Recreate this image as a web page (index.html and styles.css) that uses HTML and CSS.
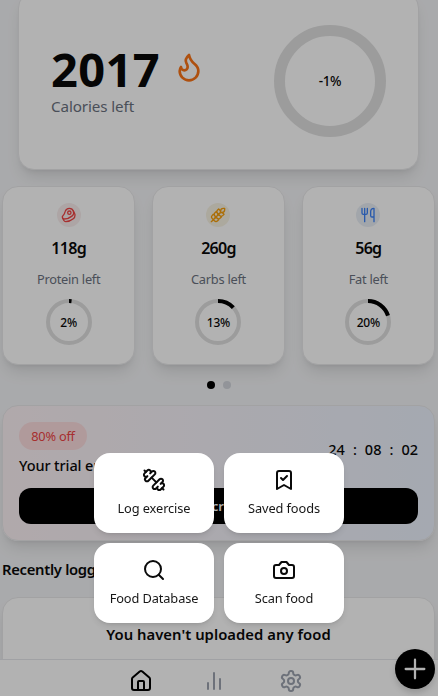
FILE: index.html
```html
<!DOCTYPE html>
<html lang="en">
<head>
<meta charset="utf-8">
<title>Calorie tracker</title>
<link rel="stylesheet" href="styles.css">
</head>
<body>
<main class="page">
  <section class="card summary">
    <div>
      <div class="total"><span class="total-value">2017</span>
        <svg class="icon flame" viewBox="0 0 24 24"><path d="M8.5 14.5A2.5 2.5 0 0 0 11 12c0-1.38-.5-2-1-3-1.072-2.143-.224-4.054 2-6 .5 2.5 2 4.9 4 6.5 2 1.6 3 3.5 3 5.5a7 7 0 1 1-14 0c0-1.153.433-2.294 1-3a2.5 2.5 0 0 0 2.5 2.5z"/></svg>
      </div>
      <div class="total-label">Calories left</div>
    </div>
    <div class="big-ring">-1%</div>
  </section>

  <section class="macros">
    <article class="card macro">
      <span class="badge red"><svg class="icon" viewBox="0 0 24 24"><circle cx="12.5" cy="8.5" r="2.5"/><path d="M12.5 2a6.5 6.5 0 0 0-6.22 4.6c-1.1 3.13-.78 3.9-3.18 6.08A3 3 0 0 0 5 18c4 0 8.4-1.8 11.4-4.3A6.5 6.5 0 0 0 12.5 2Z"/><path d="m18.5 6 2.19 4.5a6.48 6.48 0 0 1 .31 2 6.49 6.49 0 0 1-2.6 5.2C15.4 20.2 11 22 7 22a3 3 0 0 1-2.68-1.66L2.4 16.5"/></svg></span>
      <strong class="amount">118g</strong>
      <span class="macro-label">Protein left</span>
      <div class="ring"><svg viewBox="0 0 46 46"><circle class="track" cx="23" cy="23" r="21"/><circle class="value" cx="23" cy="23" r="21" pathLength="100" stroke-dasharray="2 98"/></svg><span>2%</span></div>
    </article>
    <article class="card macro">
      <span class="badge yellow"><svg class="icon" viewBox="0 0 24 24"><path d="M2 22 16 8M3.47 12.53 5 11l1.53 1.53a3.5 3.5 0 0 1 0 4.94L5 19l-1.53-1.53a3.5 3.5 0 0 1 0-4.94ZM7.47 8.53 9 7l1.53 1.53a3.5 3.5 0 0 1 0 4.94L9 15l-1.53-1.53a3.5 3.5 0 0 1 0-4.94ZM11.47 4.53 13 3l1.53 1.53a3.5 3.5 0 0 1 0 4.94L13 11l-1.53-1.53a3.5 3.5 0 0 1 0-4.94ZM20 2h2v2a4 4 0 0 1-4 4h-2V6a4 4 0 0 1 4-4ZM11.47 17.47 13 19l-1.53 1.53a3.5 3.5 0 0 1-4.94 0L5 19l1.53-1.53a3.5 3.5 0 0 1 4.94 0ZM15.47 13.47 17 15l-1.53 1.53a3.5 3.5 0 0 1-4.94 0L9 15l1.53-1.53a3.5 3.5 0 0 1 4.94 0ZM19.47 9.47 21 11l-1.53 1.53a3.5 3.5 0 0 1-4.94 0L13 11l1.53-1.53a3.5 3.5 0 0 1 4.94 0Z"/></svg></span>
      <strong class="amount">260g</strong>
      <span class="macro-label">Carbs left</span>
      <div class="ring"><svg viewBox="0 0 46 46"><circle class="track" cx="23" cy="23" r="21"/><circle class="value" cx="23" cy="23" r="21" pathLength="100" stroke-dasharray="13 87"/></svg><span>13%</span></div>
    </article>
    <article class="card macro">
      <span class="badge blue"><svg class="icon" viewBox="0 0 24 24"><path d="M3 2v7c0 1.1.9 2 2 2h4a2 2 0 0 0 2-2V2M7 2v20M21 15V2a5 5 0 0 0-5 5v6c0 1.1.9 2 2 2h3Zm0 0v7"/></svg></span>
      <strong class="amount">56g</strong>
      <span class="macro-label">Fat left</span>
      <div class="ring"><svg viewBox="0 0 46 46"><circle class="track" cx="23" cy="23" r="21"/><circle class="value" cx="23" cy="23" r="21" pathLength="100" stroke-dasharray="20 80"/></svg><span>20%</span></div>
    </article>
  </section>

  <div class="dots"><i class="dot active"></i><i class="dot"></i></div>

  <section class="card offer">
    <div class="offer-top">
      <div>
        <span class="discount">80% off</span>
        <div class="trial">Your trial ended</div>
      </div>
      <div class="timer"><span>24</span><span>:</span><span>08</span><span>:</span><span>02</span></div>
    </div>
    <button class="subscribe">Subscribe</button>
  </section>

  <h2 class="heading">Recently logged</h2>
  <section class="card empty">You haven't uploaded any food</section>
</main>

<nav class="nav">
  <svg class="icon home" viewBox="0 0 24 24"><path d="M15 21v-8a1 1 0 0 0-1-1h-4a1 1 0 0 0-1 1v8"/><path d="M3 10a2 2 0 0 1 .709-1.528l7-5.999a2 2 0 0 1 2.582 0l7 5.999A2 2 0 0 1 21 10v9a2 2 0 0 1-2 2H5a2 2 0 0 1-2-2z"/></svg>
  <svg class="icon stats" viewBox="0 0 24 24"><path d="M18 20V10M12 20V4M6 20v-6"/></svg>
  <svg class="icon gear" viewBox="0 0 24 24"><path d="M12.22 2h-.44a2 2 0 0 0-2 2v.18a2 2 0 0 1-1 1.73l-.43.25a2 2 0 0 1-2 0l-.15-.08a2 2 0 0 0-2.73.73l-.22.38a2 2 0 0 0 .73 2.73l.15.1a2 2 0 0 1 1 1.72v.51a2 2 0 0 1-1 1.74l-.15.09a2 2 0 0 0-.73 2.73l.22.38a2 2 0 0 0 2.73.73l.15-.08a2 2 0 0 1 2 0l.43.25a2 2 0 0 1 1 1.73V20a2 2 0 0 0 2 2h.44a2 2 0 0 0 2-2v-.18a2 2 0 0 1 1-1.73l.43-.25a2 2 0 0 1 2 0l.15.08a2 2 0 0 0 2.73-.73l.22-.39a2 2 0 0 0-.73-2.73l-.15-.08a2 2 0 0 1-1-1.74v-.5a2 2 0 0 1 1-1.74l.15-.09a2 2 0 0 0 .73-2.73l-.22-.38a2 2 0 0 0-2.73-.73l-.15.08a2 2 0 0 1-2 0l-.43-.25a2 2 0 0 1-1-1.73V4a2 2 0 0 0-2-2z"/><circle cx="12" cy="12" r="3"/></svg>
</nav>
<button class="add" aria-label="Add"><svg class="icon" viewBox="0 0 24 24"><path d="M5 12h14M12 5v14"/></svg></button>

<div class="overlay"></div>
<div class="menu">
  <button class="action"><svg class="icon" viewBox="0 0 24 24"><path d="M14.4 14.4 9.6 9.6"/><path d="M18.657 21.485a2 2 0 1 1-2.829-2.828l-1.767 1.768a2 2 0 1 1-2.829-2.829l6.364-6.364a2 2 0 1 1 2.829 2.829l-1.768 1.767a2 2 0 1 1 2.828 2.829z"/><path d="m21.5 21.5-1.4-1.4M3.9 3.9 2.5 2.5"/><path d="M6.404 12.768a2 2 0 1 1-2.829-2.829l1.768-1.767a2 2 0 1 1-2.828-2.829l2.828-2.828a2 2 0 1 1 2.829 2.828l1.767-1.768a2 2 0 1 1 2.829 2.829z"/></svg><span>Log exercise</span></button>
  <button class="action"><svg class="icon" viewBox="0 0 24 24"><path d="m19 21-7-4-7 4V5a2 2 0 0 1 2-2h10a2 2 0 0 1 2 2Z"/><path d="m9 10 2 2 4-4"/></svg><span>Saved foods</span></button>
  <button class="action"><svg class="icon" viewBox="0 0 24 24"><circle cx="11" cy="11" r="8"/><path d="m21 21-4.3-4.3"/></svg><span>Food Database</span></button>
  <button class="action"><svg class="icon" viewBox="0 0 24 24"><path d="M14.5 4h-5L7 7H4a2 2 0 0 0-2 2v9a2 2 0 0 0 2 2h16a2 2 0 0 0 2-2V9a2 2 0 0 0-2-2h-3l-2.5-3z"/><circle cx="12" cy="13" r="3"/></svg><span>Scan food</span></button>
</div>
</body>
</html>
```
FILE: styles.css
```css
* { box-sizing: border-box; }
html, body { height: 100%; }
body {
  margin: 0;
  overflow: hidden;
  color: #0a0a0a;
  background: #f3f4f6;
  font-family: "Segoe UI", "Noto Sans", sans-serif;
  font-size: 16px;
}
button { border: 0; padding: 0; font: inherit; color: inherit; }
.page { height: 696px; overflow: hidden; padding: 0 3px 0 2px; }
.icon {
  display: block;
  width: 24px;
  height: 24px;
  fill: none;
  stroke: currentColor;
  stroke-width: 2;
  stroke-linecap: round;
  stroke-linejoin: round;
}
.card {
  background: #fff;
  border: 1px solid #e8e8ea;
  border-radius: 16px;
  box-shadow: 0 10px 15px -3px rgba(0,0,0,.1), 0 4px 6px -4px rgba(0,0,0,.1);
}

.summary {
  display: flex;
  align-items: center;
  justify-content: space-between;
  height: 178px;
  margin: -8px 16px 0;
  padding: 0 32px;
}
.total { display: flex; align-items: center; gap: 13px; height: 49px; }
.total-value { font-size: 47px; font-weight: 700; line-height: 48px; letter-spacing: .4px; }
.flame { width: 32px; height: 32px; color: #f97316; position: relative; top: -2px; }
.total-label { height: 24px; line-height: 24px; font-size: 15.2px; letter-spacing: -.1px; color: #6b7280; }
.big-ring {
  display: flex;
  align-items: center;
  justify-content: center;
  width: 112px;
  height: 112px;
  border: 11px solid #e0e0e0;
  border-radius: 50%;
  font-size: 13.5px;
  letter-spacing: -.4px;
  font-weight: 500;
}

.macros { display: grid; grid-template-columns: repeat(3, 1fr); gap: 16.5px; margin-top: 16px; }
.macro { display: flex; flex-direction: column; align-items: center; height: 179px; padding-top: 16px; }
.badge { display: flex; align-items: center; justify-content: center; width: 24px; height: 24px; border-radius: 50%; }
.badge .icon { width: 16px; height: 16px; }
.red { color: #ef4444; background: #f8eded; }
.yellow { color: #f59e0b; background: #f7f2e3; }
.blue { color: #3b82f6; background: #e9eef5; }
.amount { margin-top: 7px; font-size: 16px; line-height: 28px; font-weight: 600; letter-spacing: -.7px; }
.macro-label { margin-top: 7px; font-size: 12.8px; line-height: 20px; letter-spacing: -.25px; color: #6b7280; }
.ring { display: grid; place-items: center; width: 46px; height: 46px; margin-top: 10px; font-size: 12px; font-weight: 500; letter-spacing: -.2px; }
.ring > * { grid-area: 1 / 1; }
.ring svg { width: 46px; height: 46px; transform: rotate(-90deg); fill: none; stroke-width: 4; }
.track { stroke: #e0e0e0; }
.value { stroke: #000; }

.dots { display: flex; justify-content: center; gap: 8px; margin-top: 16px; }
.dot { width: 8px; height: 8px; border-radius: 50%; background: #d1d5db; }
.dot.active { background: #000; }

.offer { height: 136px; margin-top: 16px; padding: 16px; background: linear-gradient(90deg, #fdf2f5, #ecf3fe); }
.offer-top { display: flex; align-items: center; justify-content: space-between; height: 56px; }
.discount { display: flex; align-items: center; justify-content: center; width: 68px; height: 28px; border-radius: 14px; color: #ef4444; background: #fddddf; font-size: 12.8px; letter-spacing: -.25px; }
.trial { margin-top: 3px; line-height: 25px; font-size: 14.5px; font-weight: 500; white-space: nowrap; letter-spacing: -.1px; }
.timer { display: flex; gap: 8px; padding-bottom: 2px; font-size: 14.5px; font-weight: 500; }
.subscribe { display: block; width: 100%; height: 36px; margin-top: 10px; padding-right: 12px; border-radius: 12px; color: #fff; background: #000; font-size: 13px; font-weight: 600; }

.heading { margin: 16px 0 0; font-size: 14.8px; line-height: 24px; font-weight: 600; letter-spacing: -.3px; }
.empty { height: 160px; margin-top: 16px; padding-top: 24px; text-align: center; font-size: 14.8px; line-height: 24px; font-weight: 600; letter-spacing: .05px; }

.nav { position: fixed; inset: auto 0 0; display: flex; height: 37px; padding: 9px 0 0 129px; background: #fff; border-top: 1px solid #e5e7eb; color: #9ca3af; }
.home { color: #000; }
.stats { margin-left: 49px; }
.gear { margin-left: 53px; }
.add { position: fixed; right: 3px; bottom: 7px; display: grid; place-items: center; width: 40px; height: 40px; border-radius: 50%; color: #fff; background: #000; box-shadow: 0 4px 6px rgba(0,0,0,.15); }
.add .icon { width: 32px; height: 32px; stroke-width: 1.7; }

.overlay { position: fixed; inset: 0; background: rgba(0,0,0,.3); }
.menu { position: fixed; left: 94px; bottom: 73px; display: grid; grid-template-columns: 120px 120px; gap: 10px; }
.action { display: flex; flex-direction: column; align-items: center; height: 80px; padding-top: 15px; border-radius: 16px; background: #fff; box-shadow: 0 4px 6px -1px rgba(0,0,0,.1), 0 2px 4px -2px rgba(0,0,0,.1); }
.action span { margin-top: 6px; line-height: 20px; font-size: 12.8px; letter-spacing: -.1px; color: #171717; }
```
